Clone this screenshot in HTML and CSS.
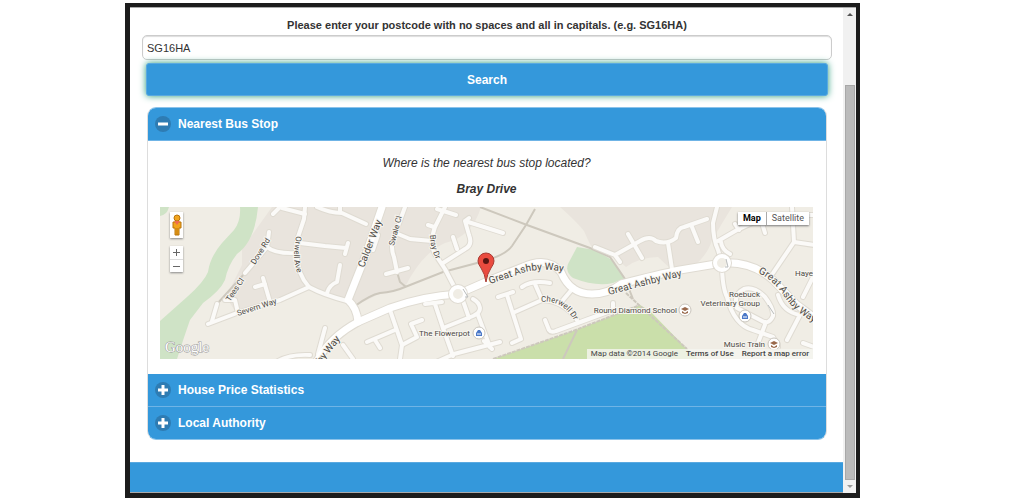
FILE: index.html
```
<!DOCTYPE html>
<html lang="en">
<head>
    <meta charset="UTF-8">
    <meta name="viewport" content="width=device-width, initial-scale=1.0">
    <title>Nearest Bus Stop</title>
    <link rel="stylesheet" href="styles.css">
</head>
<body>
    <div class="frame">
        <div class="page">
            <form class="search" onsubmit="return false">
                <label for="postcode">Please enter your postcode with no spaces and all in capitals. (e.g. SG16HA)</label>
                <input id="postcode" type="text" value="SG16HA">
                <button type="submit" class="search-btn">Search</button>
            </form>

            <div class="accordion">
                <button type="button" class="accordion-header" aria-expanded="true">
                    <svg class="icon" viewBox="0 0 16 16"><circle cx="8" cy="8" r="8"/><path d="M3 8h10"/></svg>
                    Nearest Bus Stop
                </button>
                <div class="accordion-body">
                    <p class="question">Where is the nearest bus stop located?</p>
                    <p class="answer">Bray Drive</p>
                    <div class="map">
                        <svg class="map-canvas" viewBox="0 0 653 152" preserveAspectRatio="xMidYMid slice">
                            <defs>
                                <path id="ashby-1" d="M330 77 L357 68 Q378 59 410 66"/>
                                <path id="ashby-2" d="M449 88 L475 81 L526 68"/>
                                <path id="ashby-3" d="M598 66 Q614 73 626 92 Q636 106 657 117"/>
                                <path id="orwell" d="M136 29 L134 47 Q134 60 140 72"/>
                                <path id="bray" d="M270 28 Q270 44 282 63"/>
                                <path id="cherwell" d="M381 95 Q404 92 416 117"/>
                                <!-- road network, stroked twice: casing and fill -->
                                <g id="streets">
                                    <path d="M48 117 L77 106 L120 93 L149 80 Q164 88 187 94"/>
                                    <path d="M145 0 L144 12 L137 33 Q134 64 149 80"/>
                                    <path d="M113 7 L120 0 M122 1 L145 7"/>
                                    <path d="M157 0 Q170 6 182 6 L206 17 M180 6 V0"/>
                                    <path d="M140 36 L165 39 L186 41 M188 36 L185 47"/>
                                    <path d="M109 25 L107 40 Q115 47 137 46"/>
                                    <path d="M107 40 L85 66 M57 97 L52 114 M65 93 H75 L78 106"/>
                                    <path d="M103 71 L110 95 M95 80 L105 77"/>
                                    <path d="M180 58 L177 75 Q169 78 167 86"/>
                                    <path d="M165 121 L158 147 M118 154 Q130 147 150 148"/>
                                    <path d="M245 0 L234 30 Q230 40 234 50 L237 65 M226 67 L248 61"/>
                                    <path d="M238 27 L250 32 L272 34 M213 43 L218 28"/>
                                    <path d="M285 0 L275 20 Q269 36 275 47 L285 62 L298 87"/>
                                    <path d="M277 2 L296 8 M268 18 L274 20"/>
                                    <path d="M283 56 L305 42 Q313 38 309 28 L305 14 L309 11 M305 14 L343 26 M293 30 L297 42"/>
                                    <path d="M265 97 L282 95 M275 97 L283 121 L293 149"/>
                                    <path d="M283 121 L313 109 Q320 106 320 101 Q319 95 313 92 M302 91 L309 111 M318 108 L330 140"/>
                                    <path d="M272 157 L294 147 L340 135 M324 134 L332 142"/>
                                    <path d="M230 103 L242 138 L240 152 M207 135 L235 123 M215 133 L220 141"/>
                                    <path d="M242 138 L257 130 L251 117 L262 113 M183 138 L193 152"/>
                                    <path d="M338 90 L353 85 M347 88 L361 132 L352 136"/>
                                    <path d="M355 105 L382 93 L375 77 M362 80 Q372 73 390 76"/>
                                    <path d="M382 93 Q404 94 417 113 M403 93 L414 80"/>
                                    <path d="M385 113 L389 123 Q391 126 396 124 L453 103 V96"/>
                                    <path d="M435 40 L455 48 L460 55 M455 48 L480 34 Q490 28 496 34 Q507 38 516 31 Q517 21 524 20 L547 12"/>
                                    <path d="M468 27 L482 51 M508 36 L512 62 M532 20 L538 35"/>
                                    <path d="M557 0 L553 16 Q553 32 558 43 L562 56 Q562 80 567 90 Q574 118 593 123 L613 130 L618 140"/>
                                    <path d="M577 98 Q573 88 584 82 Q594 79 605 90 Q614 102 613 109 Q609 118 602 114 L577 101 M606 115 L598 136"/>
                                    <path d="M558 34 L577 23 L592 16 M575 17 L579 23 M602 16 L605 26 M561 35 Q562 43 570 47"/>
                                    <path d="M632 0 L634 35 L613 66 M634 35 L654 38 M646 8 H654"/>
                                    <path d="M618 88 Q623 105 640 108 L627 133 M654 68 L643 90 M643 136 L654 140"/>
                                </g>
                                <g id="main-roads">
                                    <path d="M222 0 L205 50 L188 93 Q197 101 198 115"/>
                                    <path d="M157 154 Q170 130 198 115 L230 101 Q264 89 298 87 L330 73 L363 60 Q387 49 401 65 Q410 87 432 87 Q448 87 461 77 Q500 67 520 63 L562 56 Q592 54 613 73 L636 97 L656 112"/>
                                </g>
                            </defs>

                            <rect width="653" height="152" fill="#f0ede5"/>
                            <g fill="#e9e4dd">
                                <path d="M112 0 L82 42 V58 L66 90 L77 107 L120 94 L149 80 L187 94 L195 99 L217 88 L245 80 Q262 46 285 36 Q312 30 321 0 Z"/>
                                <path d="M400 0 Q416 14 424 24 Q430 38 434 44 L455 50 L466 60 Q480 50 498 50 L511 62 L535 58 Q548 47 552 33 L572 0 Z"/>
                            </g>
                            <g fill="#cfe3c6">
                                <path d="M80 0 Q81 14 74 23 L62 36 Q50 50 48 65 Q44 75 27 90 L0 114 V152 H17 Q24 130 30 113 L43 96 Q60 84 65 73 Q68 58 77 47 Q95 34 98 0 Z"/>
                                <path d="M0 0 H9 Q7 8 0 9 Z"/>
                                <path d="M417 40 L435 43 L452 53 L465 71 L453 76 Q436 80 413 71 Q405 65 408 57 Z"/>
                            </g>
                            <path fill="#cadfaa" d="M333 152 L413 124 L480 98 L490 104 L525 140 L538 152 Z"/>
                            <g fill="none" stroke="#cdc8bd" stroke-width="2">
                                <path d="M195 99 Q210 88 220 86 Q234 85 245 80 L283 65 L317 56 Q345 49 352 39 L366 18 L375 2"/>
                                <path d="M320 0 L367 18 L430 41 L450 50 L465 72 L473 92"/>
                                <path d="M237 65 L240 75 L246 80 M417 123 L403 152"/>
                                <path stroke-dasharray="4 1" d="M466 86 L480 99 L527 142 M333 152 L413 124 L480 98"/>
                                <path d="M58 96 L85 66"/>
                            </g>

                            <g class="casing"><use href="#streets" stroke-width="6"/><use href="#main-roads" stroke-width="9"/></g>
                            <g class="road"><use href="#streets" stroke-width="4"/></g>
                            <g class="road main"><use href="#main-roads" stroke-width="7"/></g>
                            <g fill="none" stroke="#dfdbd2" stroke-width="6">
                                <circle cx="298" cy="87" r="7"/>
                                <circle cx="562" cy="56" r="7"/>
                            </g>
                            <g fill="#f0ede5" stroke="#fff" stroke-width="4">
                                <circle cx="298" cy="87" r="7"/>
                                <circle cx="562" cy="56" r="7"/>
                            </g>
                            <path fill="none" stroke="#b9bcbc" stroke-width="1" d="M303 82 L308 90 L305 90 M566 52 L568 60 L565 60 M608 98 L614 107"/>

                            <g class="street-name">
                                <text transform="translate(95 58) rotate(-58)">Dove Rd</text>
                                <text transform="translate(70 95) rotate(-56)">Tees Cl</text>
                                <text transform="translate(78 109) rotate(-18)">Severn Way</text>
                                <text transform="translate(234 39) rotate(-75)">Swale Cl</text>
                                <text><textPath href="#orwell">Orwell Ave</textPath></text>
                                <text><textPath href="#bray">Bray Dr</textPath></text>
                                <text><textPath href="#cherwell">Cherwell Dr</textPath></text>
                            </g>
                            <g class="street-name large">
                                <text transform="translate(204 61) rotate(-69)">Calder Way</text>
                                <text transform="translate(161 157) rotate(-52)">by Way</text>
                                <text><textPath href="#ashby-1">Great Ashby Way</textPath></text>
                                <text><textPath href="#ashby-2">Great Ashby Way</textPath></text>
                                <text><textPath href="#ashby-3">Great Ashby Way</textPath></text>
                            </g>
                            <g class="place-name">
                                <text x="310" y="129" text-anchor="end">The Flowerpot</text>
                                <text x="517" y="106" text-anchor="end">Round Diamond School</text>
                                <text x="600" y="90" text-anchor="end">Roebuck</text>
                                <text x="600" y="99" text-anchor="end">Veterinary Group</text>
                                <text x="605" y="140" text-anchor="end">Music Train</text>
                                <text x="635" y="69">Haye</text>
                            </g>

                            <!-- place pins -->
                            <g fill="#fff" stroke="#c9c5bd">
                                <circle cx="319" cy="126" r="6"/>
                                <circle cx="585" cy="109" r="6"/>
                                <circle cx="525" cy="103" r="6"/>
                                <circle cx="614" cy="137" r="6"/>
                            </g>
                            <g fill="#4b78c8">
                                <path d="M316 129 V126 L318 123 H320 L322 126 V129 Z"/>
                                <path d="M582 112 V109 L584 106 H586 L588 109 V112 Z"/>
                            </g>
                            <path stroke="#fff" d="M317 127 H321 M583 110 H587"/>
                            <g fill="#99694b">
                                <path d="M521 102 L525 100 L529 102 L525 104 Z M522 104 L525 106 L528 104 V106 L525 107 L522 106 Z"/>
                                <path d="M610 136 L614 134 L618 136 L614 138 Z M611 138 L614 140 L617 138 V140 L614 141 L611 140 Z"/>
                            </g>

                            <!-- bus stop marker -->
                            <path fill="#ea4b3f" stroke="#a83a32" d="M326 75 Q325 67 321 61 Q318 57 318 54 A8 8 0 0 1 334 54 Q334 57 331 61 Q327 67 326 75 Z"/>
                            <circle cx="326" cy="54" r="3" fill="#5a1512"/>

                            <text class="logo" x="5" y="145">Google</text>
                        </svg>

                        <div class="map-tools">
                            <button type="button" class="pegman" aria-label="Street View">
                                <svg viewBox="0 0 12 22">
                                    <g fill="#f2a51d" stroke="#b8740c"><path d="M2 8 H10 V14 H8 V21 H4 V14 H2 Z"/><circle cx="6" cy="4" r="3"/></g>
                                    <path fill="#ef6b52" d="M3 7 H9 L6 11 Z"/>
                                    <path stroke="#b8740c" d="M6 14 V21"/>
                                </svg>
                            </button>
                            <div class="zoom">
                                <button type="button" aria-label="Zoom in"><svg viewBox="0 0 7 7"><path d="M0 3.5H7M3.5 0V7"/></svg></button>
                                <button type="button" aria-label="Zoom out"><svg viewBox="0 0 7 7"><path d="M0 3.5H7"/></svg></button>
                            </div>
                        </div>
                        <div class="map-type">
                            <button type="button" class="active">Map</button>
                            <button type="button">Satellite</button>
                        </div>
                        <div class="map-credits">
                            <span>Map data ©2014 Google</span>
                            <a href="#terms">Terms of Use</a>
                            <a href="#report">Report a map error</a>
                        </div>
                    </div>
                </div>
                <button type="button" class="accordion-header" aria-expanded="false">
                    <svg class="icon" viewBox="0 0 16 16"><circle cx="8" cy="8" r="8"/><path d="M3 8h10M8 3v10"/></svg>
                    House Price Statistics
                </button>
                <button type="button" class="accordion-header" aria-expanded="false">
                    <svg class="icon" viewBox="0 0 16 16"><circle cx="8" cy="8" r="8"/><path d="M3 8h10M8 3v10"/></svg>
                    Local Authority
                </button>
            </div>

            <footer class="footer"></footer>
        </div>

        <div class="scrollbar" aria-hidden="true">
            <div class="arrow up"></div>
            <div class="thumb"></div>
            <div class="arrow down"></div>
        </div>
    </div>
</body>
</html>
```
FILE: styles.css
```
* {
    box-sizing: border-box;
}
body {
    margin: 0;
    padding: 3px 0 2px;
    min-height: 100vh;
    display: grid;
    grid-template-columns: 125fr 735fr 164fr;
    background-color: white;
    color: #333;
    font-family: "Liberation Sans", Arial, sans-serif;
    font-size: 12px;
}
button {
    font-family: inherit;
    cursor: pointer;
}
.frame {
    grid-column: 2;
    display: flex;
    border: 5px solid #1c1c1c;
    border-top-width: 4px;
    border-right-width: 4px;
}
.page {
    flex: 1;
    min-width: 0;
    display: flex;
    flex-direction: column;
    border: 1px solid #aaa;
    border-width: 1px 0;
}

/* Search form */
.search {
    display: flex;
    flex-direction: column;
    padding: 8px 11px 0 12px;
}
.search label {
    line-height: 19px;
    font-size: 11px;
    font-weight: bold;
    text-align: center;
}
.search input {
    height: 25px;
    padding: 0 4px;
    border: 1px solid #ccc;
    border-radius: 5px;
    box-shadow: inset 0 1px 1px #ddd;
    color: #333;
    font-family: inherit;
    font-size: 11px;
}
.search-btn {
    height: 33px;
    margin: 3px 4px 0;
    border: 1px solid #5aa9e0;
    border-radius: 3px;
    background-color: #3498db;
    box-shadow: 0 0 7px #2a9d7c;
    color: white;
    font-size: 12px;
    font-weight: bold;
}

/* Collapsible sections */
.accordion {
    margin: 11px 16px 0 17px;
    border: 1px solid #ddd;
    border-top-color: #8cc3ea;
    border-bottom-color: #8cc3ea;
    border-radius: 9px;
    overflow: hidden;
}
.accordion-header {
    display: flex;
    align-items: center;
    gap: 7px;
    width: 100%;
    height: 33px;
    padding: 0 7px;
    border: 0;
    border-bottom: 1px solid #6fb4e6;
    background-color: #3498db;
    color: white;
    font-size: 12px;
    font-weight: bold;
}
.accordion-header:last-child {
    height: 32px;
    border-bottom: 0;
}
.icon {
    width: 16px;
    height: 16px;
    fill: #2e7cb3;
    stroke-width: 3;
}
.icon path {
    stroke: white;
}
.accordion-body {
    padding: 13px 13px 13px 12px;
    text-align: center;
}
.accordion-body p {
    margin: 0 0 8px;
    line-height: 18px;
    font-size: 12px;
    font-style: italic;
}
.accordion-body .answer {
    margin-bottom: 9px;
    font-weight: bold;
}

/* Map */
.map {
    position: relative;
    margin-bottom: 2px;
    font-family: Roboto, sans-serif;
    overflow: hidden;
}
.map-canvas {
    display: block;
    width: 100%;
    font-family: Roboto, sans-serif;
}
.casing, .road {
    fill: none;
    stroke: #dfdbd2;
    stroke-linecap: round;
    stroke-linejoin: round;
}
.road {
    stroke: #fbfaf8;
}
.road.main {
    stroke: white;
}
.street-name, .place-name {
    fill: #4d4a45;
    stroke: #f7f5f0;
    stroke-width: 2;
    paint-order: stroke;
    font-size: 8px;
}
.street-name.large {
    font-size: 10px;
}
.logo {
    fill: white;
    stroke: #999;
    stroke-width: 1;
    paint-order: stroke;
    font-family: "Liberation Serif", serif;
    font-size: 15px;
}
.map-tools {
    position: absolute;
    top: 5px;
    left: 10px;
    display: flex;
    flex-direction: column;
    gap: 8px;
}
.map-tools button {
    display: flex;
    align-items: center;
    justify-content: center;
    width: 13px;
    height: 13px;
    padding: 0;
    border: 0;
    background-color: white;
}
.map-tools .pegman {
    height: 26px;
    box-shadow: 0 1px 2px #888;
}
.pegman svg {
    width: 12px;
    height: 22px;
}
.zoom {
    box-shadow: 0 1px 2px #888;
}
.zoom button + button {
    border-top: 1px solid #ddd;
}
.zoom svg {
    width: 7px;
    height: 7px;
    stroke: #666;
}
.map-type {
    position: absolute;
    top: 5px;
    right: 4px;
    display: flex;
    box-shadow: 0 1px 2px #777;
}
.map-type button {
    height: 13px;
    padding: 0 5px;
    border: 0;
    background-color: white;
    color: #555;
    font-size: 9px;
    line-height: 13px;
}
.map-type .active {
    border-right: 1px solid #aaa;
    color: black;
    font-weight: bold;
}
.map-credits {
    position: absolute;
    right: 0;
    bottom: 0;
    display: flex;
    gap: 8px;
    padding: 0 4px;
    background-color: rgba(245, 245, 240, 0.8);
    color: #444;
    font-size: 8px;
    line-height: 10px;
}
.map-credits a {
    color: #444;
    font-weight: 500;
    text-decoration: none;
}

.footer {
    flex: 1;
    min-height: 29px;
    margin-top: 22px;
    border-top: 1px solid #5aa9e0;
    background-color: #3498db;
}

/* Scrollbar */
.scrollbar {
    display: flex;
    flex-direction: column;
    width: 13px;
    padding: 0 1px 0 2px;
    border-top: 1px solid #aaa;
    background-color: #f1f1f1;
}
.arrow {
    align-self: center;
    margin: 5px 0;
    border: 3px solid transparent;
}
.arrow.up {
    border-top: 0;
    border-bottom-color: #555;
    margin-bottom: 69px;
}
.arrow.down {
    border-bottom: 0;
    border-top-color: #999;
}
.thumb {
    flex: 1;
    border: 1px solid #a8a8a8;
    background-color: #bbb;
}
```
